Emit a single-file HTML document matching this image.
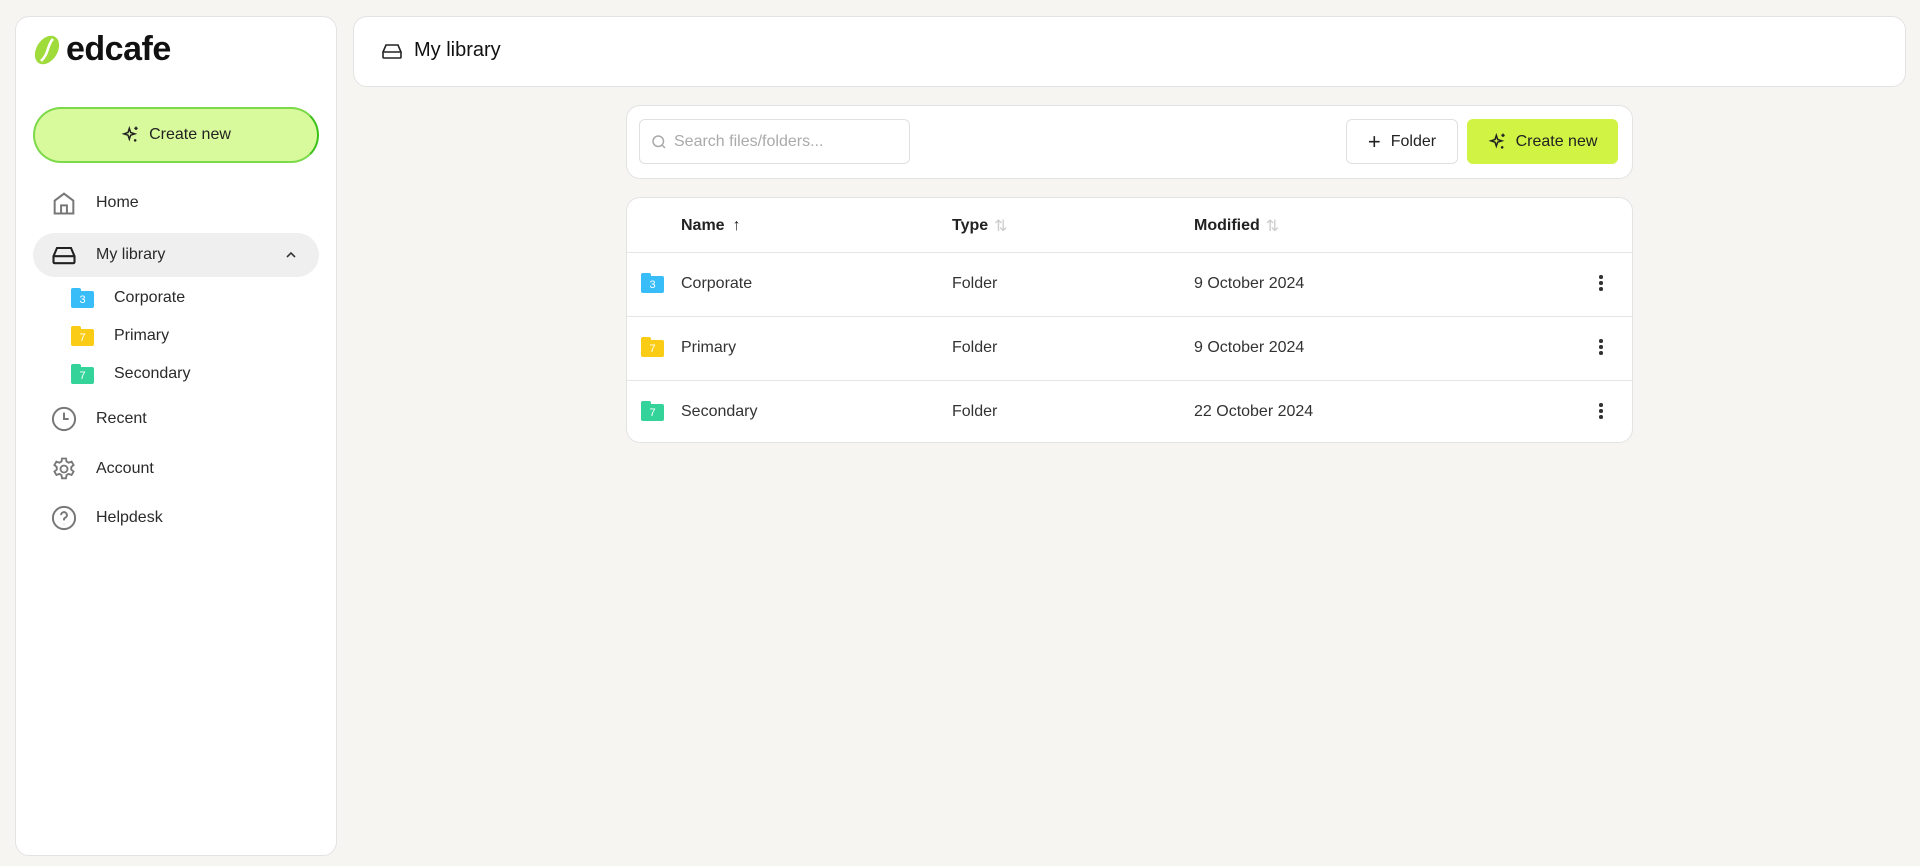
<!DOCTYPE html>
<html><head><meta charset="utf-8"><style>
*{box-sizing:border-box;margin:0;padding:0}
body{width:1920px;height:866px;background:#f6f5f2;font-family:"Liberation Sans",sans-serif;color:#222;position:relative;overflow:hidden}
.a{position:absolute}
.card{position:absolute;background:#fff;border:1px solid #e3e3e3;border-radius:14px}
.nav{position:absolute;left:50px;display:flex;align-items:center;font-size:16px;color:#2a2a2a}
.nav svg{width:28px;height:28px;margin-right:18px}
.sub{position:absolute;left:71px;display:flex;align-items:center;font-size:16px;color:#2a2a2a}
.fold{width:23px;height:20px;position:relative;margin-right:20px}
.fold b{position:absolute;left:0;top:0;width:10px;height:6px;border-radius:2px 2px 0 0}
.fold i{position:absolute;left:0;top:3px;width:23px;height:17px;border-radius:2px;color:#fff;font-style:normal;font-size:11px;text-align:center;line-height:18px}
.row{position:absolute;left:0;width:1006px;height:64px;border-top:1px solid #e6e6e6;font-size:16px;color:#333}
.row span{position:absolute;top:22px}
.dots{position:absolute;left:972px;top:22px;width:4px}
.dots u{display:block;width:3.5px;height:3.5px;background:#333;border-radius:50%;margin-bottom:2.5px}
.th{position:absolute;top:18px;font-size:16px;font-weight:700;color:#222;display:flex;align-items:center;height:20px}
.th em{font-style:normal;font-weight:400;margin-left:8px}
</style></head><body>

<div class="card" style="left:15px;top:16px;width:322px;height:840px"></div>
<!-- logo -->
<svg class="a" style="left:32px;top:34px" width="30" height="32" viewBox="0 0 30 32"><ellipse cx="15" cy="16" rx="10.5" ry="15.5" transform="rotate(32 15 16)" fill="#9edb3b"/><path d="M21 5 C15 11 17 20 9 27" stroke="#fff" stroke-width="2.6" fill="none"/></svg>
<div class="a" style="left:66px;top:30px;font-size:34px;font-weight:700;color:#111;letter-spacing:-0.5px">edcafe</div>

<div class="a" style="left:33px;top:107px;width:286px;height:56px;border-radius:28px;background:#d9f99d;border:2px solid #7bd94a;border-right-color:#3cc01a;display:flex;align-items:center;justify-content:center;font-size:16px;color:#222">
<svg width="20" height="20" viewBox="0 0 24 24" fill="none" stroke="#222" stroke-width="1.8" style="margin-right:8px"><path d="M10 4l1.6 5 5 1.6-5 1.6L10 17l-1.6-4.8L3.5 10.6l4.9-1.6z"/><path d="M18 2v4M16 4h4M17 17v3M15.5 18.5h3"/></svg>Create new</div>

<div class="nav" style="top:189px"><svg viewBox="0 0 24 24" fill="none" stroke="#777" stroke-width="1.7"><path d="M4 21V10l8-6 8 6v11zM9.5 21v-7h5v7"/></svg>Home</div>
<div class="a" style="left:33px;top:233px;width:286px;height:44px;border-radius:22px;background:#efefef"></div>
<div class="nav" style="top:241px"><svg viewBox="0 0 24 24" fill="none" stroke="#222" stroke-width="1.8"><path d="M3 13l3-7h12l3 7v5a1 1 0 0 1-1 1H4a1 1 0 0 1-1-1zM3 13h18"/><path d="M7 16h.01M10 16h.01"/></svg>My library</div>
<svg class="a" style="left:284px;top:248px" width="14" height="14" viewBox="0 0 14 14" fill="none" stroke="#333" stroke-width="1.6"><path d="M3 9l4-4 4 4"/></svg>

<div class="sub" style="top:288px"><div class="fold"><b style="background:#38bdf8"></b><i style="background:#38bdf8">3</i></div>Corporate</div>
<div class="sub" style="top:326px"><div class="fold"><b style="background:#facc15"></b><i style="background:#facc15">7</i></div>Primary</div>
<div class="sub" style="top:364px"><div class="fold"><b style="background:#34d399"></b><i style="background:#34d399">7</i></div>Secondary</div>

<div class="nav" style="top:405px"><svg viewBox="0 0 24 24" fill="none" stroke="#777" stroke-width="1.7"><circle cx="12" cy="12" r="9.5"/><path d="M12 6.5V12h4"/></svg>Recent</div>
<div class="nav" style="top:455px"><svg viewBox="0 0 24 24" fill="none" stroke="#777" stroke-width="1.6"><path d="M10.3 3h3.4l.5 2.6 1.8 1 2.5-.9 1.7 2.9-2 1.7v2.2l2 1.7-1.7 2.9-2.5-.9-1.8 1-.5 2.8h-3.4l-.5-2.8-1.8-1-2.5.9-1.7-2.9 2-1.7v-2.2l-2-1.7 1.7-2.9 2.5.9 1.8-1z"/><circle cx="12" cy="12" r="3"/></svg>Account</div>
<div class="nav" style="top:504px"><svg viewBox="0 0 24 24" fill="none" stroke="#777" stroke-width="1.7"><circle cx="12" cy="12" r="9.5"/><path d="M9.5 9.5a2.5 2.5 0 1 1 3.5 2.3c-.7.3-1 .8-1 1.5v.7M12 17v.3"/></svg>Helpdesk</div>

<!-- header -->
<div class="card" style="left:353px;top:16px;width:1553px;height:71px"></div>
<svg class="a" style="left:379px;top:39px" width="26" height="24" viewBox="0 0 24 24" fill="none" stroke="#222" stroke-width="1.6"><path d="M3 13l3-7h12l3 7v5a1 1 0 0 1-1 1H4a1 1 0 0 1-1-1zM3 13h18"/><path d="M7 16h.01M10 16h.01"/></svg>
<div class="a" style="left:414px;top:39px;font-size:20px;color:#111">My library</div>

<!-- toolbar -->
<div class="card" style="left:626px;top:105px;width:1007px;height:74px"></div>
<div class="a" style="left:639px;top:119px;width:271px;height:45px;border:1px solid #e0e0e0;border-radius:6px;display:flex;align-items:center;padding-left:10px;font-size:16px;color:#aaa">
<svg width="18" height="18" viewBox="0 0 24 24" fill="none" stroke="#aaa" stroke-width="2" style="margin-right:6px"><circle cx="11" cy="11" r="7"/><path d="M16 16l4 4"/></svg>Search files/folders...</div>
<div class="a" style="left:1346px;top:119px;width:112px;height:45px;border:1px solid #e0e0e0;border-radius:6px;display:flex;align-items:center;justify-content:center;font-size:16px;color:#222"><span style="font-size:22px;margin-right:10px;font-weight:300">+</span>Folder</div>
<div class="a" style="left:1467px;top:119px;width:151px;height:45px;background:#d0f344;border-radius:6px;display:flex;align-items:center;justify-content:center;font-size:16px;color:#222">
<svg width="20" height="20" viewBox="0 0 24 24" fill="none" stroke="#222" stroke-width="1.8" style="margin-right:8px"><path d="M10 4l1.6 5 5 1.6-5 1.6L10 17l-1.6-4.8L3.5 10.6l4.9-1.6z"/><path d="M18 2v4M16 4h4M17 17v3M15.5 18.5h3"/></svg>Create new</div>

<!-- table -->
<div class="card" style="left:626px;top:197px;width:1007px;height:246px;overflow:hidden">
<div class="th" style="left:54px">Name <em>↑</em></div>
<div class="th" style="left:325px">Type <em style="color:#ccc;margin-left:6px">⇅</em></div>
<div class="th" style="left:567px">Modified <em style="color:#ccc;margin-left:6px">⇅</em></div>
<div class="row" style="top:54px"><div class="fold a" style="left:14px;top:20px"><b style="background:#38bdf8"></b><i style="background:#38bdf8">3</i></div><span style="left:54px">Corporate</span><span style="left:325px">Folder</span><span style="left:567px">9 October 2024</span><div class="dots"><u></u><u></u><u></u></div></div>
<div class="row" style="top:118px"><div class="fold a" style="left:14px;top:20px"><b style="background:#facc15"></b><i style="background:#facc15">7</i></div><span style="left:54px">Primary</span><span style="left:325px">Folder</span><span style="left:567px">9 October 2024</span><div class="dots"><u></u><u></u><u></u></div></div>
<div class="row" style="top:182px"><div class="fold a" style="left:14px;top:20px"><b style="background:#34d399"></b><i style="background:#34d399">7</i></div><span style="left:54px">Secondary</span><span style="left:325px">Folder</span><span style="left:567px">22 October 2024</span><div class="dots"><u></u><u></u><u></u></div></div>
</div>
</body></html>
